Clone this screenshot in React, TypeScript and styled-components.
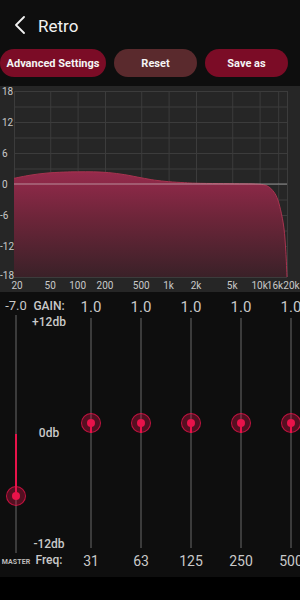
import React from 'react';
import styled, { createGlobalStyle } from 'styled-components';

const GlobalStyle = createGlobalStyle`
  html, body {
    margin: 0;
    padding: 0;
    background: #000;
  }
  * {
    box-sizing: border-box;
  }
`;

const RED = '#e8134a';

const Screen = styled.div`
  width: 300px;
  height: 600px;
  background: #000;
  font-family: Roboto, 'Liberation Sans', sans-serif;
  color: #c9c9c9;
  overflow: hidden;
`;

const Top = styled.div`
  background: #0e0e0e;
  height: 86px;
`;

const TitleBar = styled.div`
  display: flex;
  align-items: center;
  height: 49px;
  padding-left: 13px;
  gap: 11px;
`;

const Title = styled.div`
  color: #f2f2f2;
  font-size: 17px;
  padding-top: 2px;
`;

const ButtonRow = styled.div`
  display: flex;
  gap: 8px;
  height: 28px;
`;

const PillButton = styled.button<{ $muted?: boolean; $w: number }>`
  width: ${({ $w }) => $w}px;
  height: 28px;
  border: none;
  border-radius: 14px;
  background: ${({ $muted }) => ($muted ? '#5a2a2d' : '#7b0c26')};
  color: #f4f4f4;
  font-family: Roboto, 'Liberation Sans', sans-serif;
  font-size: 11px;
  font-weight: 700;
  padding: 0;
`;

const ChartPanel = styled.div`
  background: #262626;
  height: 206px;
`;

const Panel = styled.div`
  background: #0e0e0e;
  height: 285px;
  padding-top: 6px;
  overflow: hidden;
`;

const SliderGrid = styled.div`
  display: grid;
  grid-template-columns: 32px 34px repeat(5, 50px);
  align-items: stretch;
`;

const Column = styled.div`
  display: flex;
  flex-direction: column;
  align-items: center;
`;

const ValueLabel = styled.div<{ $size: number }>`
  font-size: ${({ $size }) => $size}px;
  line-height: ${({ $size }) => ($size > 14 ? 18 : 16)}px;
  color: #c9c9c9;
  white-space: nowrap;
`;

const Track = styled.div<{ $h: number; $mt: number }>`
  position: relative;
  width: 2px;
  height: ${({ $h }) => $h}px;
  margin-top: ${({ $mt }) => $mt}px;
  background: #3b3b3b;
`;

const ActiveFill = styled.div`
  position: absolute;
  left: 0;
  width: 2px;
  background: ${RED};
`;

const Thumb = styled.div`
  position: absolute;
  left: 1px;
  width: 20px;
  height: 20px;
  margin: -10px 0 0 -10px;
  border-radius: 50%;
  background: rgba(232, 19, 74, 0.32);
  border: 1.5px solid rgba(232, 19, 74, 0.75);
  display: flex;
  align-items: center;
  justify-content: center;

  &::after {
    content: '';
    width: 8px;
    height: 8px;
    border-radius: 50%;
    background: ${RED};
  }
`;

const FreqLabel = styled.div`
  margin-top: 4px;
  font-size: 14px;
  line-height: 18px;
  color: #c9c9c9;
`;

const MasterLabel = styled.div`
  margin-top: 4px;
  font-size: 7px;
  line-height: 10px;
  font-weight: 700;
  color: #bdbdbd;
  letter-spacing: 0.1px;
`;

const Legend = styled.div`
  display: flex;
  flex-direction: column;
  justify-content: space-between;
  align-items: center;
  padding-bottom: 2px;
  font-size: 12px;
  line-height: 16px;
  font-weight: 500;
  color: #c9c9c9;
`;

const LegendGroup = styled.div`
  display: flex;
  flex-direction: column;
  align-items: center;
`;

/* ---------- chart ---------- */

const PL = 14;
const PR = 287;
const PT = 5;
const PB = 191;
const fx = (f: number) => PL + ((Math.log10(f) - Math.log10(20)) / 3) * (PR - PL);
const fy = (db: number) => PT + ((18 - db) / 36) * (PB - PT);

const curvePts: [number, number][] = [
  [20, 1.1], [30, 1.7], [45, 2.1], [70, 2.3], [100, 2.35], [150, 2.35], [220, 2.2],
  [330, 1.8], [500, 1.2], [700, 0.75], [1000, 0.45], [1500, 0.25], [2000, 0.15],
  [3500, 0.08], [6000, 0.04], [9000, 0.0], [11000, -0.15], [12500, -0.5],
  [14000, -1.3], [15500, -2.6], [17000, -5], [18500, -8.5], [19400, -13], [20000, -18],
];

const smoothPath = (pts: [number, number][]) => {
  const p = pts.map(([f, d]) => [fx(f), fy(d)]);
  let d = `M${p[0][0]},${p[0][1]}`;
  for (let i = 0; i < p.length - 1; i++) {
    const p0 = p[i - 1] || p[i];
    const p1 = p[i];
    const p2 = p[i + 1];
    const p3 = p[i + 2] || p2;
    const c1x = p1[0] + (p2[0] - p0[0]) / 6;
    const c1y = p1[1] + (p2[1] - p0[1]) / 6;
    const c2x = p2[0] - (p3[0] - p1[0]) / 6;
    const c2y = p2[1] - (p3[1] - p1[1]) / 6;
    d += ` C${c1x.toFixed(2)},${c1y.toFixed(2)} ${c2x.toFixed(2)},${c2y.toFixed(2)} ${p2[0].toFixed(2)},${p2[1].toFixed(2)}`;
  }
  return d;
};

const gridFreqs = [20, 50, 100, 200, 500, 1000, 2000, 5000, 10000, 16000, 20000];
const freqLabels: [string, number][] = [
  ['20', 17], ['50', fx(50)], ['100', fx(100)], ['200', fx(200)], ['500', fx(500)],
  ['1k', fx(1000)], ['2k', fx(2000)], ['5k', fx(5000)], ['10k', fx(10000)],
  ['16k', 275], ['20k', 291.5],
];
const dbLabels = [18, 12, 6, 0, -6, -12, -18];

const EqChart: React.FC = () => {
  const curve = smoothPath(curvePts);
  const fill = `${curve} L${fx(20000)},${PB} L${PL},${PB} Z`;
  const hLines = Array.from({ length: 13 }, (_, i) => 18 - i * 3);
  return (
    <svg width="300" height="206" viewBox="0 0 300 206">
      <defs>
        <linearGradient id="eqFill" x1="0" y1={fy(2.4)} x2="0" y2={PB} gradientUnits="userSpaceOnUse">
          <stop offset="0" stopColor="#962a4c" />
          <stop offset="0.45" stopColor="#6c2539" />
          <stop offset="1" stopColor="#3a2128" />
        </linearGradient>
      </defs>
      {hLines.map((v) => (
        <line key={v} x1={PL} x2={PR} y1={fy(v) + 0.5} y2={fy(v) + 0.5} stroke="#3c3c3c" strokeWidth="1" />
      ))}
      {gridFreqs.map((f) => (
        <line key={f} x1={fx(f) + 0.5} x2={fx(f) + 0.5} y1={PT} y2={PB} stroke="#3c3c3c" strokeWidth="1" />
      ))}
      <path d={fill} fill="url(#eqFill)" />
      <path d={curve} fill="none" stroke="#a8334f" strokeWidth="1" />
      <line x1={PL} x2={PR} y1={fy(0)} y2={fy(0)} stroke="rgba(225,225,225,0.55)" strokeWidth="1.2" />
      {dbLabels.map((v) => (
        <text
          key={v}
          x={v < 0 ? 0 : 2}
          y={v === -18 ? fy(v) + 2 : fy(v) + 4}
          fill="#c9c9c9"
          fontSize="10"
          fontFamily="Roboto, 'Liberation Sans', sans-serif"
        >
          {v}
        </text>
      ))}
      {freqLabels.map(([t, x]) => (
        <text
          key={t}
          x={x}
          y={203}
          textAnchor="middle"
          fill="#c9c9c9"
          fontSize="10"
          fontFamily="Roboto, 'Liberation Sans', sans-serif"
        >
          {t}
        </text>
      ))}
    </svg>
  );
};

/* ---------- sliders ---------- */

interface SliderProps {
  value: number;
  range: number;
  height: number;
}

const SliderTrack: React.FC<SliderProps & { mt: number }> = ({ value, range, height, mt }) => {
  const half = height / 2;
  const pos = half - (value / range) * half;
  const top = Math.min(pos, half);
  const len = Math.abs(pos - half);
  return (
    <Track $h={height} $mt={mt}>
      <ActiveFill style={{ top, height: len }} />
      <Thumb style={{ top: pos }} />
    </Track>
  );
};

const bands = [
  { freq: '31', value: 1.0 },
  { freq: '63', value: 1.0 },
  { freq: '125', value: 1.0 },
  { freq: '250', value: 1.0 },
  { freq: '500', value: 1.0 },
];

const ChevronLeft = () => (
  <svg width="14" height="18" viewBox="0 0 14 18">
    <polyline points="11,1 3,9 11,17" fill="none" stroke="#f2f2f2" strokeWidth="1.8" strokeLinecap="round" strokeLinejoin="round" />
  </svg>
);

const App: React.FC = () => {
  return (
    <Screen>
      <GlobalStyle />
      <Top>
        <TitleBar>
          <ChevronLeft />
          <Title>Retro</Title>
        </TitleBar>
        <ButtonRow>
          <PillButton $w={106}>Advanced Settings</PillButton>
          <PillButton $w={83} $muted>Reset</PillButton>
          <PillButton $w={83}>Save as</PillButton>
        </ButtonRow>
      </Top>
      <ChartPanel>
        <EqChart />
      </ChartPanel>
      <Panel>
        <SliderGrid>
          <Column>
            <ValueLabel $size={13}>-7.0</ValueLabel>
            <SliderTrack value={-7} range={13.4} height={238} mt={1} />
            <MasterLabel>MASTER</MasterLabel>
          </Column>
          <Legend>
            <LegendGroup>
              <span>GAIN:</span>
              <span>+12db</span>
            </LegendGroup>
            <LegendGroup>
              <span>0db</span>
            </LegendGroup>
            <LegendGroup>
              <span>-12db</span>
              <span>Freq:</span>
            </LegendGroup>
          </Legend>
          {bands.map((b) => (
            <Column key={b.freq}>
              <ValueLabel $size={15}>{b.value.toFixed(1)}</ValueLabel>
              <SliderTrack value={b.value} range={12} height={230} mt={2} />
              <FreqLabel>{b.freq}</FreqLabel>
            </Column>
          ))}
        </SliderGrid>
      </Panel>
    </Screen>
  );
};

export default App;
